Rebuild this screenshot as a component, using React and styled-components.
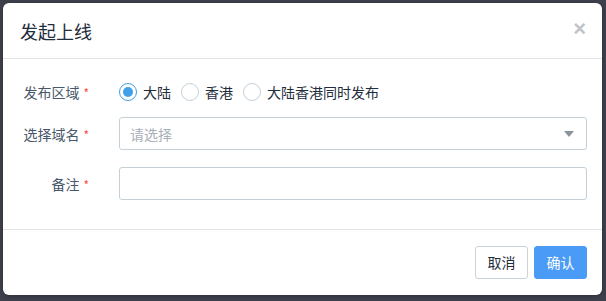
import React, {useState} from "react"
import styled, {createGlobalStyle} from "styled-components"

const GlobalStyle = createGlobalStyle`
  html, body {
    margin: 0;
    padding: 0;
    background: #3e404c;
    font-family: "Noto Sans CJK SC", "Noto Sans", "Liberation Sans", sans-serif;
  }
`

// Підкладка під діалог
const Backdrop = styled.div`
  width: 606px;
  height: 301px;
  padding: 3px 4px 0 3px;
  box-sizing: border-box;
`

const Dialog = styled.div`
  width: 599px;
  height: 292px;
  background: #ffffff;
  border-radius: 6px;
  box-shadow: 0 1px 4px rgba(0, 0, 0, 0.3);
  display: flex;
  flex-direction: column;
  overflow: hidden;
`

const Header = styled.div`
  height: 55px;
  flex-shrink: 0;
  display: flex;
  align-items: center;
  justify-content: space-between;
  padding: 0 16px 0 17px;
  border-bottom: 1px solid #e2e4e7;
`

const Title = styled.h3`
  margin: 0;
  font-size: 18px;
  font-weight: 400;
  color: #1f2d3d;
  line-height: 1;
`

const Close = styled.span`
  font-family: "Liberation Sans", sans-serif;
  font-size: 22px;
  font-weight: 700;
  color: #c0c4c8;
  line-height: 1;
  margin-top: -3px;
  cursor: pointer;
`

const Body = styled.div`
  flex-grow: 1;
  padding: 16px 15px 0 0;
  border-bottom: 1px solid #e2e4e7;
  display: flex;
  flex-direction: column;
`

const Row = styled.div`
  display: flex;
  align-items: center;
  height: 33px;
  margin-top: ${({gap}) => gap || 0}px;
`

const Label = styled.label`
  width: 86px;
  flex-shrink: 0;
  text-align: right;
  font-size: 14px;
  color: #48576a;
  padding-right: 30px;
  white-space: nowrap;
`

const Star = styled.span`
  color: #ff4949;
  font-size: 12px;
  margin-left: 4px;
`

const RadioGroup = styled.div`
  display: flex;
  align-items: center;
  gap: 10px;
`

const RadioItem = styled.label`
  display: flex;
  align-items: center;
  gap: 6px;
  font-size: 14px;
  color: #1f2d3d;
  cursor: pointer;
`

const RadioCircle = styled.span`
  width: 18px;
  height: 18px;
  box-sizing: border-box;
  border-radius: 50%;
  border: 1px solid ${({checked}) => (checked ? "#3fa2e8" : "#c4d0d8")};
  display: flex;
  align-items: center;
  justify-content: center;

  &::after {
    content: "";
    width: 10px;
    height: 10px;
    border-radius: 50%;
    background: #3fa2e8;
    display: ${({checked}) => (checked ? "block" : "none")};
  }
`

const Field = styled.div`
  flex-grow: 1;
  height: 33px;
  box-sizing: border-box;
  border: 1px solid #c3d0d7;
  border-radius: 3px;
  display: flex;
  align-items: center;
  justify-content: space-between;
  padding: 0 10px;
`

const Placeholder = styled.span`
  font-size: 14px;
  color: #a8b0b8;
`

const Caret = styled.span`
  width: 0;
  height: 0;
  border-left: 5px solid transparent;
  border-right: 5px solid transparent;
  border-top: 6px solid #8b949c;
  margin-right: 2px;
`

const TextInput = styled.input`
  flex-grow: 1;
  height: 33px;
  box-sizing: border-box;
  border: 1px solid #c3d0d7;
  border-radius: 3px;
  padding: 0 10px;
  font-size: 14px;
  font-family: inherit;
  outline: none;
`

const Footer = styled.div`
  height: 64px;
  flex-shrink: 0;
  display: flex;
  align-items: center;
  justify-content: flex-end;
  gap: 6px;
  padding: 0 15px 1px 0;
`

const Button = styled.button`
  height: 33px;
  width: 53px;
  padding: 0;
  font-size: 14px;
  font-family: inherit;
  border-radius: 3px;
  cursor: pointer;
  border: 1px solid ${({primary}) => (primary ? "#4a9bf6" : "#c9d3da")};
  background: ${({primary}) => (primary ? "#4a9bf6" : "#ffffff")};
  color: ${({primary}) => (primary ? "#ffffff" : "#1f2d3d")};
`

const regions = ["大陆", "香港", "大陆香港同时发布"]

export default function App() {
  const [region, setRegion] = useState("大陆")

  return (
    <>
      <GlobalStyle />
      <Backdrop>
        <Dialog>
          <Header>
            <Title>发起上线</Title>
            <Close>×</Close>
          </Header>
          <Body>
            <Row>
              <Label>发布区域<Star>*</Star></Label>
              <RadioGroup>
                {regions.map((r) => (
                  <RadioItem key={r} onClick={() => setRegion(r)}>
                    <RadioCircle checked={region === r} />
                    {r}
                  </RadioItem>
                ))}
              </RadioGroup>
            </Row>
            <Row gap={9}>
              <Label>选择域名<Star>*</Star></Label>
              <Field>
                <Placeholder>请选择</Placeholder>
                <Caret />
              </Field>
            </Row>
            <Row gap={17}>
              <Label>备注<Star>*</Star></Label>
              <TextInput />
            </Row>
          </Body>
          <Footer>
            <Button>取消</Button>
            <Button primary>确认</Button>
          </Footer>
        </Dialog>
      </Backdrop>
    </>
  )
}
